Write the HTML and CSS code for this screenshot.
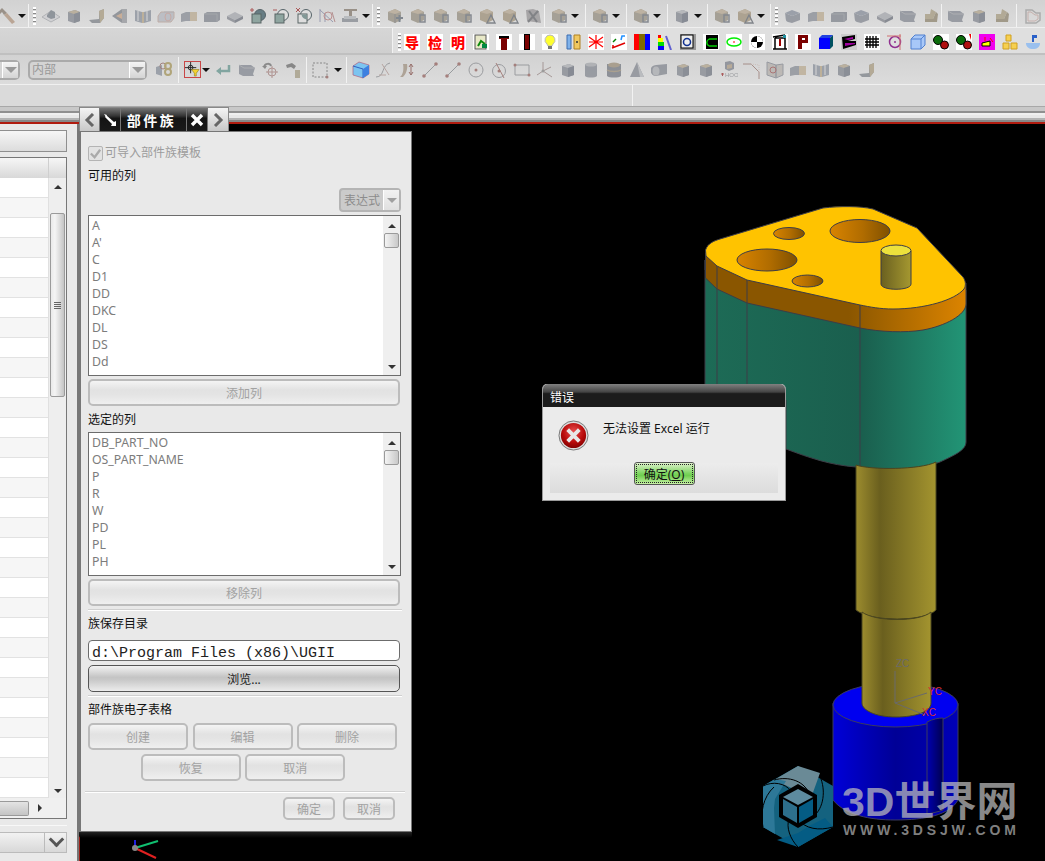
FILE: index.html
```html
<!DOCTYPE html>
<html lang="zh">
<head>
<meta charset="utf-8">
<title>部件族</title>
<link rel="stylesheet" href="styles.css">
</head>
<body>
<svg class="defs" width="0" height="0" aria-hidden="true">
  <defs>
    <linearGradient id="gSide" x1="0" x2="1" y1="0" y2="0"><stop offset="0" stop-color="#8a5600"/><stop offset=".55" stop-color="#8a5600"/><stop offset="1" stop-color="#dc8400"/></linearGradient>
    <linearGradient id="gBody" x1="0" x2="1" y1="0" y2="0"><stop offset="0" stop-color="#1d6b56"/><stop offset=".6" stop-color="#1a5f4e"/><stop offset="1" stop-color="#229576"/></linearGradient>
    <linearGradient id="gHole" x1="0" x2="1" y1="0" y2="0"><stop offset="0" stop-color="#d98400"/><stop offset=".55" stop-color="#b06c00"/><stop offset="1" stop-color="#7f5000"/></linearGradient>
    <linearGradient id="gShaft" x1="0" x2="1" y1="0" y2="0"><stop offset="0" stop-color="#9c8c2e"/><stop offset=".3" stop-color="#6a5f1e"/><stop offset="1" stop-color="#a3942f"/></linearGradient>
    <linearGradient id="gPin" x1="0" x2="1" y1="0" y2="0"><stop offset="0" stop-color="#6a6020"/><stop offset="1" stop-color="#a59830"/></linearGradient>
    <linearGradient id="gBlue" x1="0" x2="1" y1="0" y2="0"><stop offset="0" stop-color="#0000d8"/><stop offset=".5" stop-color="#000096"/><stop offset="1" stop-color="#0000b8"/></linearGradient>
    <linearGradient id="gNotch" x1="0" x2="1" y1="0" y2="0"><stop offset="0" stop-color="#0000b0"/><stop offset="1" stop-color="#000050"/></linearGradient>
    <radialGradient id="gErr" cx=".5" cy=".35" r=".7"><stop offset="0" stop-color="#e85050"/><stop offset=".6" stop-color="#b80a0a"/><stop offset="1" stop-color="#7a0000"/></radialGradient>

    <symbol id="hammer" viewBox="0 0 18 18"><path d="M0 6l5-5 5 5-3 2-2-3-3 3z" fill="#8d8378"/><path d="M7 8l3-2 8 9-3 2z" fill="#b39a86"/></symbol>
    <symbol id="cube" viewBox="0 0 18 18"><path d="M3 5l7-2 5 2v9l-6 2-6-2z" fill="#8a8e96"/><path d="M3 5l6 2 6-2-5-2z" fill="#b0b2b6"/><path d="M9 7l6-2v9l-6 2z" fill="#767b86"/></symbol>
    <symbol id="cubeT" viewBox="0 0 18 18"><path d="M3 5l7-2 5 2v9l-6 2-6-2z" fill="#8a8e96"/><path d="M3 5l6 2 6-2-5-2z" fill="#b4a892"/><path d="M9 7l6-2v9l-6 2z" fill="#7b8089"/></symbol>
    <symbol id="cubePlus" viewBox="0 0 18 18"><path d="M2 5l7-3 6 3v8l-6 3-7-3z" fill="#9a9488"/><path d="M2 5l7 2 6-2-6-3z" fill="#b8ab97"/><path d="M9 7v9" stroke="#7f7f80"/><path d="M10 11h7M13.500 8v7" stroke="#6d7680" stroke-width="2"/></symbol>
    <symbol id="cubeMark" viewBox="0 0 18 18"><path d="M2 5l7-3 6 3v8l-6 3-7-3z" fill="#9a9488"/><path d="M2 5l7 2 6-2-6-3z" fill="#b8ab97"/><path d="M11 8h5v7h-5z" fill="none" stroke="#737880" stroke-width="1.500"/></symbol>
    <symbol id="tri" viewBox="0 0 18 18"><path d="M2 5l7-3 6 3v8l-6 3-7-3z" fill="#a39782"/><path d="M2 5l7 2 6-2-6-3z" fill="#b8ab97"/><path d="M13 8l4 8H9z" fill="none" stroke="#6c7178" stroke-width="1.300"/></symbol>
    <symbol id="plate" viewBox="0 0 18 18"><path d="M1 9l8-4 8 4-8 4z" fill="#a9abb0"/><path d="M1 9v3l8 4v-3z" fill="#8a8d94"/><path d="M9 13v3l8-4V9z" fill="#777b84"/></symbol>
    <symbol id="eye" viewBox="0 0 18 18"><path d="M0 10l9-6 9 6-9 5z" fill="#cfcfd2" stroke="#a7a9ad"/><path d="M5 8l4-5 4 2v6l-4 1-4-2z" fill="#80878f"/></symbol>
    <symbol id="bracket" viewBox="0 0 18 18"><path d="M1 13l10-1V4l5-2v9l-4 5H4z" fill="#868a90"/><path d="M11 4l5-2v9l-4 5z" fill="#ada188"/></symbol>
    <symbol id="wedge" viewBox="0 0 18 18"><path d="M1 9l10-7h5v14h-5z" fill="#84888f"/><path d="M5 9l6-3v6z" fill="#c5a58b"/><path d="M11 2h5v14h-5z" fill="#9b9da1"/></symbol>
    <symbol id="book" viewBox="0 0 18 18"><path d="M1 3l7 2v11l-7-2zM17 3l-7 2v11l7-2z" fill="#9096a0"/><path d="M8 5h2v11H8z" fill="#b7a88d"/><path d="M4 4v10M13 4v10" stroke="#d8d8d8"/></symbol>
    <symbol id="cyl" viewBox="0 0 18 18"><path d="M1 9l3-4h13v6l-3 4H1z" fill="#b6b9c0" stroke="#b9a49c"/><path d="M7 5h10" stroke="#a9abb0"/><ellipse cx="11" cy="10" rx="3" ry="4" fill="none" stroke="#c4a09a"/></symbol>
    <symbol id="slab" viewBox="0 0 18 18"><path d="M1 7l5-2h11v9H6l-5 1z" fill="#8f939b"/><path d="M10 5h7v9h-7z" fill="#bcae97"/></symbol>
    <symbol id="slab2" viewBox="0 0 18 18"><path d="M1 7l3-2h13v8l-3 2H1z" fill="#888c94"/><path d="M1 7h13v8" fill="none" stroke="#999ca2"/></symbol>
    <symbol id="boolA" viewBox="0 0 18 18"><circle cx="11" cy="8" r="5.500" fill="#4f6a72" stroke="#3a4a50"/><rect x="3" y="7" width="9" height="9" fill="#7f9a94" stroke="#3f4c4c"/><path d="M1 3h4M3 1v4" stroke="#a03c3c"/></symbol>
    <symbol id="boolS" viewBox="0 0 18 18"><circle cx="11" cy="8" r="5.500" fill="#e0e0e0" stroke="#3a4a50"/><rect x="3" y="7" width="9" height="9" fill="#7f9a94" stroke="#3f4c4c"/><path d="M1 3h4" stroke="#a03c3c"/></symbol>
    <symbol id="boolI" viewBox="0 0 18 18"><circle cx="11" cy="8" r="5.500" fill="#e0e0e0" stroke="#3a4a50"/><rect x="3" y="7" width="9" height="9" fill="#e0e0e0" stroke="#3f4c4c"/><path d="M6.500 7.500h5.500v5a5.500 5.500 0 0 1-5.500-5z" fill="#6f8a88"/><path d="M1 1l4 4M5 1L1 5" stroke="#a03c3c"/></symbol>
    <symbol id="tree" viewBox="0 0 18 18"><path d="M2 2v13M2 3l13 12M7 6v9" stroke="#8b8fa8" fill="none"/><circle cx="10" cy="9" r="4" fill="none" stroke="#b58080"/><path d="M14 5l3 10" stroke="#aa8080"/></symbol>
    <symbol id="anvil" viewBox="0 0 18 18"><path d="M3 2h13v2h-5v6H8V4H3z" fill="#8b8176"/><path d="M1 11h16v4H1z" fill="#8c9097"/><path d="M3 9h12v3H3z" fill="#b3b6ba"/></symbol>
    <symbol id="pdown" viewBox="0 0 18 18"><path d="M1 6l7-3 8 3-8 3z" fill="#8e94a0"/><path d="M1 6c1 5 0 8 3 9l4 1 8-3V6l-8 3z" fill="#8b8f98"/></symbol>
    <symbol id="shell" viewBox="0 0 18 18"><path d="M2 3l7-1 6 2 2 12-14-2z" fill="#9c9a9c"/><path d="M5 4l8 11" stroke="#6f7175" stroke-width="2"/><path d="M14 4L4 15" stroke="#6f7175" stroke-width="2"/></symbol>
    <symbol id="hull" viewBox="0 0 18 18"><path d="M1 4h12l4 3-2 6 1 2H5L1 13z" fill="#8b8f98"/><path d="M1 4l5 3h11" fill="none" stroke="#a5a7ab"/></symbol>
    <symbol id="lthing" viewBox="0 0 18 18"><path d="M9 2l5 3-3 7H3V7h5z" fill="#aaa088"/><path d="M11 12l3-7 2 2-1 8H3v-3z" fill="#958c78"/></symbol>
    <symbol id="heart" viewBox="0 0 18 18"><path d="M2 3h6l4 3h4v7l-4 3H2z" fill="none" stroke="#a2a2a2" stroke-width="1.500"/><path d="M4 5h3l4 3h3v4l-3 2H4z" fill="none" stroke="#c2a7a2"/></symbol>
    <symbol id="axes" viewBox="0 0 18 18"><path d="M7 10V1M7 10l8-4M7 10l9 6M7 10l-6 4" stroke="#9a8a88" fill="none"/><circle cx="7" cy="10" r="1.500" fill="#8e8e8e"/></symbol>
    <symbol id="linept" viewBox="0 0 18 18"><path d="M3 15L15 3" stroke="#8a8e92"/><circle cx="3" cy="15" r="1.800" fill="#9a6d69"/><circle cx="15" cy="3" r="1.800" fill="#9a6d69"/></symbol>
    <symbol id="circ" viewBox="0 0 18 18"><circle cx="9" cy="9" r="7" fill="none" stroke="#8d8f93"/><circle cx="9" cy="9" r="1.500" fill="#9a6d69"/></symbol>
    <symbol id="circ2" viewBox="0 0 18 18"><circle cx="9" cy="10" r="6.500" fill="none" stroke="#8d8f93"/><circle cx="9" cy="10" r="1.500" fill="#9a6d69"/><path d="M6 2l8 15" stroke="#9a6d69"/></symbol>
    <symbol id="rectp" viewBox="0 0 18 18"><path d="M2 4h14v10H2z" fill="none" stroke="#8d8f93"/><circle cx="16" cy="14" r="1.500" fill="#9a6d69"/><circle cx="2" cy="4" r="1.500" fill="#9a6d69"/></symbol>
    <symbol id="curve" viewBox="0 0 18 18"><path d="M1 16c9 0 5-12 14-14" fill="none" stroke="#8d8f93"/><path d="M7 3l7 11M4 14h7" stroke="#b09a96"/></symbol>
    <symbol id="curve2" viewBox="0 0 18 18"><path d="M2 16c3-2 4-8 3-13h4c1 5-1 10-4 13z" fill="#a59889"/><path d="M13 3v11M11 6l2-3 2 3M11 11l2 3 2-3" stroke="#8a5a55" fill="none"/></symbol>
    <symbol id="barrel" viewBox="0 0 18 18"><path d="M3 3h12v12c-2 2-10 2-12 0z" fill="#8b8f97"/><ellipse cx="9" cy="3.500" rx="6" ry="2" fill="#a9abaf"/></symbol>
    <symbol id="barrelT" viewBox="0 0 18 18"><path d="M2 3h14v12c-2 2-12 2-14 0z" fill="#7d8189"/><ellipse cx="9" cy="4" rx="6" ry="2.500" fill="#a09480"/><path d="M2 9c3 2 11 2 14 0" stroke="#a09480" stroke-width="1.500" fill="none"/></symbol>
    <symbol id="cone" viewBox="0 0 18 18"><path d="M9 1l7 15H2z" fill="#8a8e96"/><path d="M9 1l3 15h4z" fill="#b4b6ba"/></symbol>
    <symbol id="tube" viewBox="0 0 18 18"><path d="M5 4l11-1v10L5 15a5 5 0 0 1 0-11z" fill="#8a8e96"/><ellipse cx="5" cy="10" rx="3.500" ry="4.500" fill="#aeb0b4"/></symbol>
    <symbol id="hoos" viewBox="0 0 18 18"><path d="M5 1l5-1 4 2v6l-5 2-4-2z" fill="#858992"/><path d="M7 4l5-1v4l-5 1z" fill="#b1a18b"/><path d="M1 13h3M2.500 12v3" stroke="#a04040"/><text x="5" y="16" font-size="6" fill="#8d8f93" font-family="Liberation Sans">HOOS</text></symbol>
    <symbol id="fillet" viewBox="0 0 18 18"><path d="M0 3h8l8 8v7" fill="none" stroke="#9a7f78"/><path d="M8 3l8 1v7" fill="none" stroke="#c9b9b5" stroke-dasharray="1 1"/></symbol>
    <symbol id="pages" viewBox="0 0 18 18"><path d="M1 1l9 3v13l-9-3zM17 3l-7 1v13l7-3z" fill="#b6b2ae" stroke="#8a8e96"/><circle cx="7" cy="9" r="3" fill="none" stroke="#a06060"/></symbol>

    <symbol id="chart" viewBox="0 0 16 16"><rect width="16" height="16" fill="#fff"/><rect x="2" y="1" width="11" height="14" fill="#e8e8c8" stroke="#555"/><path d="M5 12l3-5 4 3" stroke="#0a8a0a" stroke-width="2" fill="none"/><rect x="9" y="10" width="5" height="4" fill="#084"/></symbol>
  </defs>
</svg>

<div class="app">
  <header class="toolbars">
    <div class="tb-row tb-row-1">
      <div class="grp grp-a"><span class="slot slot-cut"><svg class="ico"><use href="#hammer"/></svg></span><span class="dd"></span></div>
      <div class="grp grp-b"><span class="grip"></span>
        <span class="slot"><svg class="ico"><use href="#eye"/></svg></span>
        <span class="slot"><svg class="ico"><use href="#cubeT"/></svg></span>
        <span class="slot"><svg class="ico"><use href="#bracket"/></svg></span>
        <span class="slot"><svg class="ico"><use href="#wedge"/></svg></span>
        <span class="slot"><svg class="ico"><use href="#book"/></svg></span>
        <span class="slot"><svg class="ico"><use href="#cyl"/></svg></span>
        <span class="slot"><svg class="ico"><use href="#slab"/></svg></span>
        <span class="slot"><svg class="ico"><use href="#slab2"/></svg></span>
        <span class="slot"><svg class="ico"><use href="#plate"/></svg></span>
        <span class="slot"><svg class="ico"><use href="#boolA"/></svg></span>
        <span class="slot"><svg class="ico"><use href="#boolS"/></svg></span>
        <span class="slot"><svg class="ico"><use href="#boolI"/></svg></span>
        <span class="slot"><svg class="ico"><use href="#tree"/></svg></span>
        <span class="slot"><svg class="ico"><use href="#anvil"/></svg></span>
        <span class="dd"></span></div>
      <div class="grp grp-c"><span class="grip"></span>
        <span class="slot"><svg class="ico"><use href="#cubePlus"/></svg></span>
        <span class="slot"><svg class="ico"><use href="#cubeMark"/></svg></span>
        <span class="slot"><svg class="ico"><use href="#cubeMark"/></svg></span>
        <span class="slot"><svg class="ico"><use href="#cubeMark"/></svg></span>
        <span class="slot"><svg class="ico"><use href="#tri"/></svg></span>
        <span class="slot"><svg class="ico"><use href="#tri"/></svg></span>
        <span class="slot"><svg class="ico"><use href="#shell"/></svg></span></div>
      <div class="grp grp-d"><span class="slot"><svg class="ico"><use href="#cubeMark"/></svg></span><span class="dd"></span></div>
      <div class="grp grp-d"><span class="slot"><svg class="ico"><use href="#cubeMark"/></svg></span><span class="dd"></span></div>
      <div class="grp grp-d"><span class="slot"><svg class="ico"><use href="#cubeMark"/></svg></span><span class="dd"></span></div>
      <div class="grp grp-d grp-dn"><span class="slot"><svg class="ico"><use href="#cube"/></svg></span><span class="dd"></span></div>
      <div class="grp grp-h"><span class="slot"><svg class="ico"><use href="#cubeMark"/></svg></span><span class="slot"><svg class="ico"><use href="#tri"/></svg></span><span class="dd"></span></div>
      <div class="grp grp-i"><span class="grip"></span>
        <span class="slot"><svg class="ico"><use href="#pdown"/></svg></span>
        <span class="slot"><svg class="ico"><use href="#slab"/></svg></span>
        <span class="slot"><svg class="ico"><use href="#slab2"/></svg></span>
        <span class="slot"><svg class="ico"><use href="#pdown"/></svg></span>
        <span class="slot"><svg class="ico"><use href="#plate"/></svg></span>
        <span class="slot"><svg class="ico"><use href="#hull"/></svg></span>
        <span class="slot"><svg class="ico"><use href="#lthing"/></svg></span></div>
      <div class="grp grp-j">
        <span class="slot"><svg class="ico"><use href="#hull"/></svg></span>
        <span class="slot"><svg class="ico"><use href="#cubeT"/></svg></span>
        <span class="slot"><svg class="ico"><use href="#lthing"/></svg></span></div>
      <div class="grp grp-k"><span class="slot"><svg class="ico"><use href="#heart"/></svg></span></div>
    </div>

    <div class="tb-row tb-row-2">
      <div class="color-bar"><span class="grip"></span>
        <span class="cslot"><b class="rtxt">导</b></span>
        <span class="cslot"><b class="rtxt">检</b></span>
        <span class="cslot"><b class="rtxt">明</b></span>
        <span class="cslot"><svg class="cico"><use href="#chart"/></svg></span>
        <span class="cslot"><svg class="cico" viewBox="0 0 16 16"><rect width="16" height="16" fill="#fff"/><path d="M3 2h10v3h-2v11H5V5H3z" fill="#7a0000"/><path d="M3 2h10v2H3z" fill="#000"/></svg></span>
        <span class="cslot"><svg class="cico" viewBox="0 0 16 16"><rect width="16" height="16" fill="#fff"/><path d="M5 0h6v16H5z" fill="#000"/><path d="M6 1h4v14H6z" fill="#7a0000"/></svg></span>
        <span class="cslot"><svg class="cico" viewBox="0 0 16 16"><rect width="16" height="16" fill="#fff"/><path d="M8 1a5 5 0 0 1 3 9l-1 2H6L5 10a5 5 0 0 1 3-9z" fill="#ffff30" stroke="#bbb"/><path d="M6 12h4v3H6z" fill="#777"/></svg></span>
        <span class="cslot"><svg class="cico" viewBox="0 0 16 16"><path d="M2 1h4v14H2z" fill="#7fb2ea" stroke="#3d6db0"/><path d="M9 1h6v14H9z" fill="#f0c860" stroke="#b08020"/><circle cx="12" cy="8" r="1" fill="#333"/></svg></span>
        <span class="cslot"><svg class="cico" viewBox="0 0 16 16"><rect width="16" height="16" fill="#fff"/><path d="M1 3l14 10M1 13L15 3M8 1v14M1 8h14" stroke="#f00" stroke-width="1.200"/></svg></span>
        <span class="cslot"><svg class="cico" viewBox="0 0 16 16"><rect width="16" height="16" fill="#fff"/><path d="M1 14l13-5M2 14v-3" stroke="#e00000" stroke-width="1.500" fill="none"/><path d="M2 8l3-3" stroke="#008000" stroke-width="1.500"/><path d="M10 6l1-4h3" stroke="#2090ff" stroke-width="1.500" fill="none"/></svg></span>
        <span class="cslot"><svg class="cico" viewBox="0 0 16 16"><rect width="5" height="16" fill="#f00"/><rect x="5" width="6" height="16" fill="#806a00"/><rect x="11" width="5" height="16" fill="#00f"/></svg></span>
        <span class="cslot"><svg class="cico" viewBox="0 0 16 16"><rect width="3" height="3" x="1" y="1" fill="#f00"/><rect width="5" height="4" x="1" y="4" fill="#ff0"/><rect width="6" height="4" x="1" y="8" fill="#0d0"/><rect width="6" height="4" x="1" y="12" fill="#00f"/><path d="M9 2l5 14" stroke="#6060d0" stroke-width="2"/></svg></span>
        <span class="cslot"><svg class="cico" viewBox="0 0 16 16"><rect width="16" height="16" fill="#999"/><rect x="1" y="1" width="12" height="13" fill="#eee" stroke="#000"/><circle cx="7" cy="8" r="3.500" fill="none" stroke="#103090" stroke-width="1.500"/></svg></span>
        <span class="cslot"><svg class="cico" viewBox="0 0 16 16"><rect width="16" height="16" fill="#fff"/><path d="M3 1h12v14H3z" fill="#000"/><path d="M6 5h8M6 12h8M6 5c-3 2-3 5 0 7" stroke="#0c0" stroke-width="1.500" fill="none"/></svg></span>
        <span class="cslot"><svg class="cico" viewBox="0 0 16 16"><rect width="16" height="16" fill="#fff"/><ellipse cx="8" cy="8" rx="7" ry="4" fill="none" stroke="#0e0" stroke-width="1.500"/><path d="M8 7v2" stroke="#f00"/></svg></span>
        <span class="cslot"><svg class="cico" viewBox="0 0 16 16"><rect width="16" height="16" fill="#fff"/><circle cx="8" cy="8" r="6" fill="#000"/><path d="M8 2a6 6 0 0 1 6 6H8zM8 8H2a6 6 0 0 0 6 6z" fill="#fff"/></svg></span>
        <span class="cslot"><svg class="cico" viewBox="0 0 16 16"><rect width="16" height="16" fill="#fff"/><path d="M3 4h10v11M3 4v11M1 15h14M1 3l12-2" stroke="#000" stroke-width="1.500" fill="none"/><path d="M8 5v7" stroke="#a00000" stroke-width="2"/><path d="M11 1h3v3h-3z" fill="#2090a0"/></svg></span>
        <span class="cslot"><svg class="cico" viewBox="0 0 16 16"><rect width="16" height="16" fill="#fff"/><path d="M3 1h10v8H7v6H3z" fill="#7a0000"/><path d="M7 4h3v2H7z" fill="#fff"/></svg></span>
        <span class="cslot"><svg class="cico" viewBox="0 0 16 16"><path d="M1 4h11v11H1z" fill="#00f"/><path d="M1 4l3-3h11l-3 3z" fill="#2040e0"/><path d="M12 4l3-3v11l-3 3z" fill="#005060"/></svg></span>
        <span class="cslot"><svg class="cico" viewBox="0 0 16 16"><rect width="16" height="16" fill="#ccc"/><path d="M1 3l13-2v4l-7 2h8v4L2 15z" fill="#000"/><path d="M3 5l9-2v2L7 6zM4 9h10v1L4 12z" fill="#a000a0"/></svg></span>
        <span class="cslot"><svg class="cico" viewBox="0 0 16 16"><rect width="16" height="16" fill="#fff"/><path d="M3 2v12M6 2v12M9 2v12M12 2v12M1 5h14M1 8h14M1 11h14" stroke="#000" stroke-width="1.300"/></svg></span>
        <span class="cslot"><svg class="cico" viewBox="0 0 16 16"><circle cx="8" cy="8" r="5.500" fill="none" stroke="#903090" stroke-width="1.500"/><path d="M0 2h14M13 0v16" stroke="#d07070"/><circle cx="8" cy="8" r="1" fill="#903090"/></svg></span>
        <span class="cslot"><svg class="cico" viewBox="0 0 16 16"><path d="M1 5l4-4h10v10l-4 4H1z" fill="#a8c8f8" stroke="#5080d0"/><path d="M1 5h10v10M11 5l4-4" fill="none" stroke="#5080d0"/></svg></span>
        <span class="cslot"><svg class="cico" viewBox="0 0 16 16"><rect width="16" height="16" fill="#fff"/><circle cx="5" cy="6" r="4.500" fill="#0a6a0a" stroke="#000"/><circle cx="11.500" cy="11" r="4" fill="#b01010" stroke="#000"/></svg></span>
        <span class="cslot"><svg class="cico" viewBox="0 0 16 16"><rect width="16" height="16" fill="#fff"/><circle cx="5" cy="6" r="4.500" fill="#0a6a0a" stroke="#000"/><circle cx="11.500" cy="11" r="4" fill="#b01010" stroke="#000"/><path d="M13 0l2 0v6z" fill="#e00"/></svg></span>
        <span class="cslot"><svg class="cico" viewBox="0 0 16 16"><rect width="16" height="16" fill="#f000f0"/><path d="M3 9l8-2v5H3z" fill="#ff0" stroke="#000"/><path d="M6 3v4M11 4l3 4" stroke="#f00"/></svg></span>
        <span class="cslot"><svg class="cico" viewBox="0 0 16 16"><path d="M4 1h5v6H4zM1 9h6v6H1zM9 9h6v6H9z" fill="#f6d050" stroke="#d0a020"/></svg></span>
        <span class="cslot"><svg class="cico" viewBox="0 0 16 16"><path d="M1 9h14c0 4-3 6-7 6s-7-2-7-6z" fill="#9ac0ee"/><path d="M7 1h5v3H9v4H7z" fill="#2a60c8"/></svg></span>
      </div>
    </div>

    <div class="tb-row tb-row-3">
      <div class="combo combo-cut"><span class="combo-arrow"></span></div>
      <div class="combo combo-name"><span class="combo-text">内部</span><span class="combo-arrow"></span></div>
      <span class="slot slot-link"><svg class="ico" viewBox="0 0 18 18"><path d="M1 6l6-2v11l-6-2z" fill="#9096a0"/><circle cx="8" cy="5" r="3" fill="none" stroke="#96706c"/><circle cx="13" cy="5" r="3" fill="none" stroke="#a89a66" stroke-width="2"/><circle cx="13" cy="11" r="3" fill="none" stroke="#a89a66" stroke-width="2"/></svg></span>
      <span class="vsep"></span>
      <span class="filter"><svg class="ico-filter" viewBox="0 0 16 16"><path d="M6 0v12M0 6h12" stroke="#222"/><circle cx="6" cy="6" r="2.500" fill="none" stroke="#222"/><path d="M7 8h8l-3 4v3H10v-3z" fill="#f2d230" stroke="#8a7a10" stroke-width=".6"/></svg></span>
      <span class="dd dd-f"></span>
      <span class="slot"><svg class="ico" viewBox="0 0 18 18"><path d="M15 4v6H6" fill="none" stroke="#6f9a94" stroke-width="2.500"/><path d="M7 6l-5 4 5 4z" fill="#6f9a94"/></svg></span>
      <span class="slot slot-w"><svg class="ico"><use href="#hull"/></svg></span>
      <span class="slot"><svg class="ico" viewBox="0 0 18 18"><path d="M3 6c1-4 6-4 7-1" fill="none" stroke="#7a7a7a" stroke-width="2"/><path d="M1 5l3 3 2-3z" fill="#7a7a7a"/><circle cx="11" cy="11" r="4" fill="none" stroke="#a78683"/><path d="M11 5v12M5 11h12" stroke="#a78683"/></svg></span>
      <span class="slot"><svg class="ico" viewBox="0 0 18 18"><path d="M2 4l6-2 4 3-2 3-3-2-4 1z" fill="#777"/><path d="M11 9h5v8h-5z" fill="#a8a08a"/></svg></span>
      <span class="vsep vsep-2"></span>
      <span class="slot slot-dot"><svg class="ico" viewBox="0 0 18 18"><path d="M2 2h14v14H2z" fill="none" stroke="#777" stroke-dasharray="2 1.500"/><circle cx="16" cy="16" r="1.500" fill="#9a6d69"/></svg></span>
      <span class="dd dd-s"></span>
      <span class="vsep vsep-3"></span>
      <span class="slot"><svg class="ico ico-cube" viewBox="0 0 18 18"><path d="M1 5l6-4 10 3v9l-6 4-10-3z" fill="#7cc4f0" stroke="#b06080" stroke-width=".7"/><path d="M1 5l10 3v9" fill="none" stroke="#3060c0"/><path d="M11 8l6-4v9l-6 4z" fill="#3e80e0"/></svg></span>
      <span class="slot"><svg class="ico"><use href="#curve"/></svg></span>
      <span class="slot"><svg class="ico"><use href="#curve2"/></svg></span>
      <span class="slot"><svg class="ico"><use href="#linept"/></svg></span>
      <span class="slot"><svg class="ico"><use href="#linept"/></svg></span>
      <span class="slot"><svg class="ico"><use href="#circ"/></svg></span>
      <span class="slot"><svg class="ico"><use href="#circ2"/></svg></span>
      <span class="slot"><svg class="ico"><use href="#rectp"/></svg></span>
      <span class="slot"><svg class="ico"><use href="#axes"/></svg></span>
      <span class="slot"><svg class="ico"><use href="#cube"/></svg></span>
      <span class="slot"><svg class="ico"><use href="#barrel"/></svg></span>
      <span class="slot"><svg class="ico"><use href="#barrelT"/></svg></span>
      <span class="slot"><svg class="ico"><use href="#cone"/></svg></span>
      <span class="slot"><svg class="ico"><use href="#tube"/></svg></span>
      <span class="slot"><svg class="ico"><use href="#cubeT"/></svg></span>
      <span class="slot"><svg class="ico"><use href="#cubeT"/></svg></span>
      <span class="slot"><svg class="ico"><use href="#hoos"/></svg></span>
      <span class="slot"><svg class="ico"><use href="#fillet"/></svg></span>
      <span class="slot"><svg class="ico"><use href="#pages"/></svg></span>
      <span class="slot"><svg class="ico"><use href="#slab"/></svg></span>
      <span class="slot"><svg class="ico"><use href="#book"/></svg></span>
      <span class="slot"><svg class="ico"><use href="#cubeT"/></svg></span>
      <span class="slot"><svg class="ico"><use href="#bracket"/></svg></span>
    </div>

    <div class="tb-row tb-row-4"><div class="status-l"></div><div class="status-r"></div></div>
    <div class="strip"></div>
  </header>

  <main class="workspace">
    <aside class="side">
      <div class="side-head"></div>
      <div class="side-table">
        <div class="side-cols"><span class="side-col"></span></div>
        <div class="side-body">
          <div class="side-rows"></div>
          <div class="side-vbar"><span class="arr-up"></span><span class="side-thumb"><span class="grab"></span></span><span class="arr-dn"></span></div>
        </div>
        <div class="side-hbar"><span class="side-hthumb"></span><span class="arr-r"></span></div>
      </div>
      <div class="side-foot"><span class="side-foot-l"></span><span class="side-chev"></span></div>
    </aside>

    <section class="canvas">
      <svg class="model" viewBox="79 124 966 737" width="966" height="737">
        <!-- teal body -->
        <path class="ln" fill="url(#gBody)" d="M705 260V400H786V449C810 458 830 465 856 467C890 470 920 470 940 462C955 455 966 450 966 442V290L705 270Z"/>
        <path class="ln" d="M717 284V400M747 300V400M860 325V466"/>
        <!-- orange band -->
        <path class="ln" fill="url(#gSide)" d="M705.500 253V278L717 289L747 303L860 328C880 332 905 333 923 330C945 326 966 315 966 304V283L890 300L747 270L717 255Z"/>
        <path class="ln" d="M717 266V289M747 280V303M860 305V328"/>
        <!-- yellow top -->
        <path class="ln" fill="#ffc300" d="M705.500 250C708 243 714 241 720 239L823 208C840 206 860 206 873 209L917 228L963 277C966 281 966 286 964 289C955 300 925 309 893 309C880 309 870 307 860 305L747 280L717 266L706 256Z"/>
        <ellipse class="ln" cx="767" cy="260" rx="30" ry="11" fill="url(#gHole)"/>
        <ellipse class="ln" cx="789" cy="233.500" rx="15.500" ry="6" fill="url(#gHole)"/>
        <ellipse class="ln" cx="860" cy="231" rx="30" ry="11.500" fill="url(#gHole)"/>
        <ellipse class="ln" cx="807.500" cy="281" rx="15.500" ry="6" fill="url(#gHole)"/>
        <path class="ln" fill="url(#gPin)" d="M881 251V284C881 291 911 291 911 284V251Z"/>
        <ellipse class="ln" cx="896" cy="250.500" rx="15" ry="5.500" fill="#ece13c"/>
        <!-- shaft -->
        <path class="ln-s" fill="url(#gShaft)" d="M856 465C870 470 920 470 936 462V610C925 622 870 622 856 610Z"/>
        <!-- blue -->
        <path class="ln-b" fill="url(#gBlue)" d="M833 703V800C845 815 870 820 895 820C925 820 950 815 958 800V703Z"/>
        <ellipse class="ln-b" cx="895.500" cy="705" rx="62.500" ry="22" fill="#0000f0"/>
        <path class="ln-b" fill="url(#gNotch)" d="M927 722C933 719 938 718 943 718V810C938 812 932 813 927 814Z"/>
        <path class="ln-s" fill="url(#gShaft)" d="M862 612C875 622 920 622 931 612V703C931 712 915 717 896 717C875 717 862 710 862 703Z"/>
        <!-- WCS -->
        <path class="wcs" d="M895 703V671M895 703L927 693M895 703L925 715"/>
        <text class="wcs-t" x="896" y="667">ZC</text>
        <text class="wcs-r" x="928" y="695">YC</text>
        <text class="wcs-r" x="922" y="716">XC</text>
        <!-- triad -->
        <path class="tr-z" d="M135 848V840"/><path class="tr-y" d="M135 848L158 841"/><path class="tr-x" d="M135 848L156 858"/>
        <circle cx="135" cy="848" r="3" fill="#888"/>
        <!-- watermark -->
        <g class="wm">
          <path fill="#14627f" d="M798 766l35 20v41l-35 20-35-20v-41z"/>
          <path fill="#6a8a96" d="M798 766l-24 14 24 11 13 7 9-25z"/>
          <path fill="#2d7898" d="M763 786v41l12 7-1-26 1-9 11-18-11-2z"/>
          <path fill="#045c84" d="M798 847l35-20-8-9-14 7-13 8-21 7z"/>
          <path fill="none" stroke="#000" d="M774 780c14-4 32 0 37 18M821 779c5 14 2 32-10 39M833 827c-14 4-28 2-35-8M798 847c-8-8-12-20-9-28M763 827c-3-14 0-30 11-40M763 786c10-5 22-3 28 5"/>
          <path fill="#000" d="M798 784l19 11v22l-19 11-19-11v-22z"/>
          <path fill="#5d8b9f" d="M798 789l15 8-15 8-15-8z"/>
          <path fill="#2d6f8c" d="M783 799l14 8v16l-14-8z"/>
          <path fill="#045c84" d="M813 799l-14 8v16l14-8z"/>
        </g>
        <text class="wm-big" x="842" y="816">3D世界网</text>
        <text class="wm-small" x="843" y="835">WWW.3DSJW.COM</text>
      </svg>

      <div class="dlg">
        <div class="tabs">
          <span class="tab tab-light tab-first"><svg class="tab-i" viewBox="0 0 12 14"><path d="M9 1L3 7l6 6" fill="none" stroke="#666" stroke-width="3"/></svg></span>
          <span class="tab tab-dark"><svg class="tab-i" viewBox="0 0 14 14"><path d="M1 1l3 1-1 2zM3 2l8 7 2-1v5H8l1-2-7-7z" fill="#fff"/></svg></span>
          <span class="tab tab-dark tab-title">部件族</span>
          <span class="tab tab-dark"><svg class="tab-i" viewBox="0 0 14 14"><path d="M2 2l10 10M12 2L2 12" stroke="#fff" stroke-width="3.400"/></svg></span>
          <span class="tab tab-light"><svg class="tab-i" viewBox="0 0 12 14"><path d="M3 1l6 6-6 6" fill="none" stroke="#666" stroke-width="3"/></svg></span>
        </div>
        <div class="dlg-body">
          <div class="check-row"><span class="check"><svg class="check-i" viewBox="0 0 14 14"><path d="M2 7l4 4 6-8" fill="none" stroke="#aaa" stroke-width="2.500"/></svg></span><span class="dis">可导入部件族模板</span></div>
          <div class="label l-avail">可用的列</div>
          <div class="mini-combo"><span class="mini-text">表达式</span><span class="mini-arrow"></span></div>
          <div class="list list-a">
            <ul class="items"><li>A</li><li>A'</li><li>C</li><li>D1</li><li>DD</li><li>DKC</li><li>DL</li><li>DS</li><li>Dd</li></ul>
            <div class="vbar"><span class="arr-up"></span><span class="thumb"></span><span class="arr-dn"></span></div>
          </div>
          <button class="btn btn-wide" disabled>添加列</button>
          <div class="label l-sel">选定的列</div>
          <div class="list list-b">
            <ul class="items"><li>DB_PART_NO</li><li>OS_PART_NAME</li><li>P</li><li>R</li><li>W</li><li>PD</li><li>PL</li><li>PH</li></ul>
            <div class="vbar"><span class="arr-up"></span><span class="thumb"></span><span class="arr-dn"></span></div>
          </div>
          <button class="btn btn-wide" disabled>移除列</button>
          <div class="sep sep-1"></div>
          <div class="label l-dir">族保存目录</div>
          <div class="path">d:\Program Files (x86)\UGII</div>
          <button class="btn btn-wide btn-on">浏览...</button>
          <div class="sep sep-2"></div>
          <div class="label l-xls">部件族电子表格</div>
          <div class="btn-row btn-row-1"><button class="btn btn-m" disabled>创建</button><button class="btn btn-m" disabled>编辑</button><button class="btn btn-m" disabled>删除</button></div>
          <div class="btn-row btn-row-2"><button class="btn btn-m" disabled>恢复</button><button class="btn btn-m" disabled>取消</button></div>
          <div class="sep sep-3"></div>
          <div class="foot"><button class="btn btn-s" disabled>确定</button><button class="btn btn-s" disabled>取消</button></div>
        </div>
        <div class="dlg-bottom"></div>
      </div>

      <div class="err">
        <div class="err-title">错误</div>
        <div class="err-body">
          <div class="err-msg">
            <svg class="err-i" viewBox="0 0 32 32"><circle cx="16" cy="16" r="15" fill="#ddd" stroke="#777"/><circle cx="16" cy="16" r="13" fill="url(#gErr)"/><path d="M10 10l12 12M22 10L10 22" stroke="#e8e8e8" stroke-width="4"/></svg>
            <span class="err-text">无法设置 Excel 运行</span>
          </div>
          <div class="err-foot"><button class="ok">确定(<u>O</u>)</button></div>
        </div>
      </div>
    </section>
  </main>
</div>
</body>
</html>
```
FILE: styles.css
```css
* { box-sizing: border-box; }
html, body { margin: 0; padding: 0; height: 100%; overflow: hidden; }
body { font: 12px "Noto Sans", "Noto Sans CJK SC", sans-serif; background: #d8d8d8; color: #111; }
.defs { position: absolute; }
.app { width: 1045px; height: 861px; display: flex; flex-direction: column; overflow: hidden; }

/* toolbars */
.toolbars { flex: none; }
.tb-row { display: flex; align-items: center; background: #d8d8d8; }
.tb-row-1 { height: 28px; align-items: stretch; padding-top: 4px; border-bottom: 1px solid #efefef; background: linear-gradient(#d2d2d2, #dcdcdc); }
.tb-row-2 { height: 27px; justify-content: flex-end; align-items: stretch; border-bottom: 2px solid #c0c0c0; background: linear-gradient(#d6d6d6, #cfcfcf); }
.tb-row-3 { height: 30px; border-bottom: 1px solid #f0f0f0; background: linear-gradient(#d2d2d2, #dcdcdc); }
.tb-row-4 { height: 22px; align-items: stretch; border-bottom: 1px solid #a8a8a8; background: #dadada; }
.status-l { width: 633px; border-right: 1px solid #f2f2f2; }
.status-r { flex: 1; }
.strip { height: 17px; background: linear-gradient(#c8c8c8 0 4px, #909090 4px 6px, #f0f0f0 6px 8px, #e8e8e8 8px 11px, #b4b4b4 11px 13px, #888 13px 15px, #b01c10 15px 17px); }

.grp { display: flex; align-items: center; border-right: 1px solid #f2f2f2; flex: none; height: 23px; }
.grp-a { width: 29px; }
.slot-cut { margin-left: -6px; }
.grp-b { width: 344px; padding-left: 2px; }
.grp-c { width: 172px; padding-left: 2px; }
.grp-d { width: 41px; padding-left: 2px; }
.grp-dn { width: 40px; }
.grp-h { width: 63px; padding-left: 2px; }
.grp-i { width: 171px; padding-left: 2px; }
.grp-j { width: 75px; padding-left: 2px; }
.grp-k { flex: 1; border-right: 0; padding-left: 4px; }
.slot { width: 23px; height: 22px; flex: none; display: flex; align-items: center; justify-content: center; }
.ico { width: 18px; height: 18px; display: block; opacity: .82; filter: blur(.3px); }
.ico-cube { opacity: 1; filter: none; }
.grip { width: 3px; height: 18px; margin: 0 3px 0 2px; flex: none; background: repeating-linear-gradient(#fff 0 2px, #8a8a8a 2px 3px, transparent 3px 4px); }
.dd { width: 10px; flex: none; height: 4px; display: flex; position: relative; }
.dd::after { content: ""; margin: 0 auto; border-left: 4px solid transparent; border-right: 4px solid transparent; border-top: 4px solid #111; }

.color-bar { display: flex; width: 653px; align-items: center; background: #dfdfdf; border-left: 1px solid #f2f2f2; padding: 2px 0 0 1px; }
.color-bar .grip { margin: 0 3px 0 4px; }
.cslot { width: 23px; flex: none; display: flex; }
.cico { width: 16px; height: 16px; display: block; }
.rtxt { width: 16px; height: 16px; background: #fff; color: #f00; font: 900 14px/16px "Noto Sans CJK SC", sans-serif; text-align: center; }

/* row 3 */
.combo { height: 20px; border: 2px solid #aaa; border-radius: 5px; display: flex; align-items: stretch; background: #d4d4d4; flex: none; }
.combo-cut { width: 20px; border-left: 0; border-radius: 0 5px 5px 0; margin-right: 8px; justify-content: flex-end; }
.combo-name { width: 119px; justify-content: space-between; }
.combo-text { padding-left: 2px; font-size: 12px; line-height: 15px; color: #999; }
.combo-arrow { width: 16px; background: linear-gradient(#f4f4f4, #d4d4d4); border-left: 1px solid #fff; display: flex; align-items: center; justify-content: center; }
.combo-arrow::after { content: ""; border-left: 6px solid transparent; border-right: 6px solid transparent; border-top: 6px solid #999; }
.slot-link { margin-left: 5px; }
.vsep { width: 1px; height: 26px; background: #f2f2f2; margin: 0 5px 0 3px; flex: none; }
.filter { width: 17px; height: 17px; border: 1px solid #c84848; flex: none; display: block; }
.ico-filter { width: 15px; height: 15px; display: block; }
.dd-f { margin: 0; }
.slot-w { margin-left: 1px; }
.vsep-2 { margin: 0 0 0 2px; }
.slot-dot { margin-left: 1px; }
.dd-s { margin-left: 2px; }
.vsep-3 { margin: 0 2px 0 3px; }

/* workspace */
.workspace { flex: 1; display: flex; min-height: 0; }
.side { width: 79px; flex: none; background: #e9e9e9; border-right: 2px solid #777; padding-top: 6px; display: flex; flex-direction: column; }
.side-head { width: 67px; height: 22px; flex: none; background: linear-gradient(#f6f6f6, #dcdcdc); border: 1px solid #8f8f8f; border-left: 0; }
.side-table { width: 67px; margin-top: 5px; height: 662px; flex: none; border: 1px solid #777; border-left: 0; display: flex; flex-direction: column; background: #f0f0f0; }
.side-cols { height: 20px; flex: none; background: linear-gradient(#f6f6f6, #d8d8d8); position: relative; display: flex; justify-content: flex-end; }
.side-col { width: 18px; border-left: 1px solid #cfcfcf; }
.side-body { flex: 1; display: flex; min-height: 0; }
.side-rows { flex: 1; background: repeating-linear-gradient(#fff 0 19px, #e2e2e2 19px 20px, #f6f6f6 20px 39px, #e2e2e2 39px 40px); }
.side-vbar { width: 18px; flex: none; display: flex; flex-direction: column; align-items: center; background: #eee; padding-top: 7px; border-left: 1px solid #e0e0e0; }
.side-thumb { width: 15px; height: 184px; margin-top: 24px; border: 1px solid #9a9a9a; border-radius: 2px; background: linear-gradient(90deg, #e9e9e9, #f4f4f4 30%, #c4c4c4); display: flex; align-items: center; justify-content: center; }
.grab { width: 7px; height: 7px; background: repeating-linear-gradient(#666 0 1px, transparent 1px 2px); }
.arr-up, .arr-dn { width: 0; height: 0; border-left: 4px solid transparent; border-right: 4px solid transparent; flex: none; }
.arr-up { border-bottom: 4px solid #333; }
.arr-dn { border-top: 4px solid #333; margin-top: auto; margin-bottom: 5px; }
.side-hbar { height: 20px; flex: none; display: flex; align-items: center; background: #f0f0f0; }
.side-hthumb { width: 29px; height: 15px; background: linear-gradient(#e4e4e4, #c4c4c4); border: 1px solid #9a9a9a; border-left: 0; border-radius: 0 2px 2px 0; }
.arr-r { width: 0; height: 0; margin-left: 9px; border-top: 4px solid transparent; border-bottom: 4px solid transparent; border-left: 4px solid #333; }
.side-foot { width: 67px; height: 28px; margin-top: 6px; border-top: 1px solid #f8f8f8; padding-top: 6px; flex: none; display: flex; }
.side-foot-l { flex: 1; background: linear-gradient(#f2f2f2, #d8d8d8); border: 1px solid #bbb; border-left: 0; }
.side-chev { width: 22px; position: relative; background: linear-gradient(#f2f2f2, #d8d8d8); border: 1px solid #bbb; border-left: 0; }
.side-chev::after { content: ""; position: absolute; left: 6px; top: 1px; width: 8px; height: 8px; border-right: 3px solid #555; border-bottom: 3px solid #555; transform: rotate(45deg); }

.canvas { flex: 1; position: relative; background: #000; border-left: 1px solid #a02018; }
.model { position: absolute; left: -1px; top: 0; display: block; }
.ln { stroke: #3d3d46; stroke-width: 1; fill-rule: nonzero; }
path.ln:not([fill]) { fill: none; }
.ln-s { stroke: #4a4620; }
.ln-b { stroke: #3a3a60; }
.wcs { stroke: #6a6a6a; fill: none; }
.wcs-t { fill: #6a6a6a; font: 10px "Liberation Sans", sans-serif; }
.wcs-r { fill: #d83030; font: 10px "Liberation Sans", sans-serif; }
.tr-z { stroke: #2020e0; stroke-width: 2; }
.tr-y { stroke: #10c070; stroke-width: 2; }
.tr-x { stroke: #e02020; stroke-width: 2; }
.wm-big { font: 700 41px "Liberation Sans", "Noto Sans CJK SC", sans-serif; fill: rgba(190, 190, 190, .72); }
.wm-small { font: 700 14px "Liberation Sans", sans-serif; letter-spacing: 3.850px; fill: #7f7f7f; }

/* part family dialog */
.dlg { position: absolute; left: -1px; top: -17px; width: 333px; display: flex; flex-direction: column; }
.tabs { display: flex; height: 24px; background: #777; border: 1px solid #888; border-bottom: 0; width: 150px; gap: 1px; flex: none; }
.tab { display: flex; align-items: center; justify-content: center; flex: none; width: 20px; }
.tab-first { width: 19px; }
.tab-light { background: linear-gradient(#f4f4f4, #c8c8c8); }
.tab-dark { background: linear-gradient(#777 0, #333 35%, #141414 45%, #1a1a1a); }
.tab-title { width: 65px; color: #fff; padding-right: 4px; font: 700 14px/20px "Noto Sans CJK SC", sans-serif; letter-spacing: 2.500px; }
.tab-i { width: 14px; height: 14px; display: block; }
.dlg-body { height: 701px; background: #e9e9e9; border: 1px solid #777; border-left-width: 2px; padding: 13px 9px 0 7px; display: flex; flex-direction: column; flex: none; }
.dlg-bottom { height: 6px; background: linear-gradient(#222, #000); border-radius: 0 0 3px 3px; flex: none; }
.check-row { display: flex; align-items: center; height: 16px; gap: 2px; flex: none; }
.check { width: 15px; height: 15px; border: 1px solid #b4b4b4; border-radius: 2px; background: #e2e2e2; display: block; }
.check-i { width: 13px; height: 13px; display: block; }
.dis { color: #9c9c9c; line-height: 14px; }
.label { height: 16px; line-height: 18px; flex: none; color: #111; }
.l-avail { margin-top: 6px; }
.l-sel { margin-top: 5px; }
.l-dir { margin-top: 4px; }
.l-xls { margin-top: 5px; line-height: 16px; }
.mini-combo { width: 62px; height: 24px; margin: 5px 1px 0 0; align-self: flex-end; display: flex; flex: none; border: 2px solid #b4b4b4; border-radius: 4px; background: #cbcbcb; }
.mini-text { flex: 1; text-align: center; line-height: 21px; color: #8c8c8c; }
.mini-arrow { width: 16px; background: linear-gradient(#f2f2f2, #e0e0e0); border-left: 1px solid #fff; display: flex; align-items: center; justify-content: center; }
.mini-arrow::after { content: ""; border-left: 5px solid transparent; border-right: 5px solid transparent; border-top: 5px solid #a0a0a0; }
.list { display: flex; flex: none; background: #fff; border: 1px solid #6c6c6c; width: 313px; }
.list-a { height: 161px; margin-top: 3px; }
.list-b { height: 144px; margin-top: 5px; }
.items { flex: 1; list-style: none; margin: 0; padding: 1px 0 0 3px; color: #7c7c7c; font-size: 12.300px; line-height: 17px; }
.items li { height: 17px; }
.vbar { width: 17px; flex: none; background: #efefef; display: flex; flex-direction: column; align-items: center; padding-top: 8px; }
.thumb { width: 15px; height: 15px; margin-top: 5px; background: linear-gradient(90deg, #f4f4f4, #c8c8c8); border: 1px solid #9a9a9a; border-radius: 2px; flex: none; }
.vbar .arr-dn { margin-bottom: 6px; }
.btn { font: 12px "Noto Sans", "Noto Sans CJK SC", sans-serif; color: #a2a2a2; padding: 0; background: linear-gradient(#f4f4f4, #e2e2e2 40%, #e4e4e4 60%, #efefef); border: 2px solid #bcbcbc; border-radius: 5px; flex: none; }
.btn-wide { width: 312px; height: 27px; margin-top: 3px; }
.btn-on { color: #222; background: linear-gradient(#f2f2f2, #c4c4c4 45%, #c8c8c8 55%, #ececec); border: 1px solid #555; margin-top: 4px; }
.sep { height: 2px; flex: none; background: linear-gradient(#d0d0d0 0 1px, #fff 1px); }
.sep-1 { margin-top: 3px; }
.sep-2 { margin-top: 3px; }
.sep-3 { margin: 10px -3px 0; }
.path { width: 312px; height: 21px; margin-top: 9px; background: #fff; border: 1px solid #6c6c6c; border-radius: 4px; font: 15px/25px "Liberation Mono", monospace; padding-left: 3px; color: #222; flex: none; white-space: nowrap; overflow: hidden; }
.btn-row { display: flex; gap: 4.500px; flex: none; }
.btn-row-1 { margin-top: 5px; }
.btn-row-2 { margin-top: 4px; justify-content: center; padding-right: 4px; }
.btn-m { width: 100px; height: 27px; }
.foot { display: flex; justify-content: flex-end; gap: 8px; margin-top: 4px; padding-right: 7px; flex: none; }
.btn-s { width: 52px; height: 23px; }

/* error dialog */
.err { position: absolute; left: 462px; top: 260px; width: 244px; height: 117px; display: flex; flex-direction: column; border: 1px solid #9a9a9a; border-top: 0; border-radius: 5px 5px 0 0; background: #ebebeb; }
.err-title { height: 23px; flex: none; color: #fff; line-height: 28px; padding-left: 7px; background: linear-gradient(#808080, #444 35%, #1c1c1c 42%, #1c1c1c); border-radius: 5px 5px 0 0; }
.err-body { flex: 1; display: flex; flex-direction: column; padding: 0 7px 7px 7px; }
.err-msg { flex: 1; display: flex; align-items: flex-start; gap: 14px; padding: 13px 0 0 8px; }
.err-i { width: 31px; height: 31px; display: block; flex: none; }
.err-text { line-height: 16px; margin-top: 1px; color: #111; }
.err-foot { height: 30px; flex: none; background: linear-gradient(#ececec, #dcdcdc); display: flex; justify-content: center; align-items: flex-start; }
.ok { width: 61px; height: 23px; margin-top: -1px; padding: 0; font: 12px "Noto Sans", "Noto Sans CJK SC", sans-serif; color: #111; border: 1px solid #555; border-radius: 3px; background: linear-gradient(#dff2cc, #7bd45e 50%, #6fce50 60%, #c6f2a4); outline: 1px dotted #222; outline-offset: -3px; }
```
